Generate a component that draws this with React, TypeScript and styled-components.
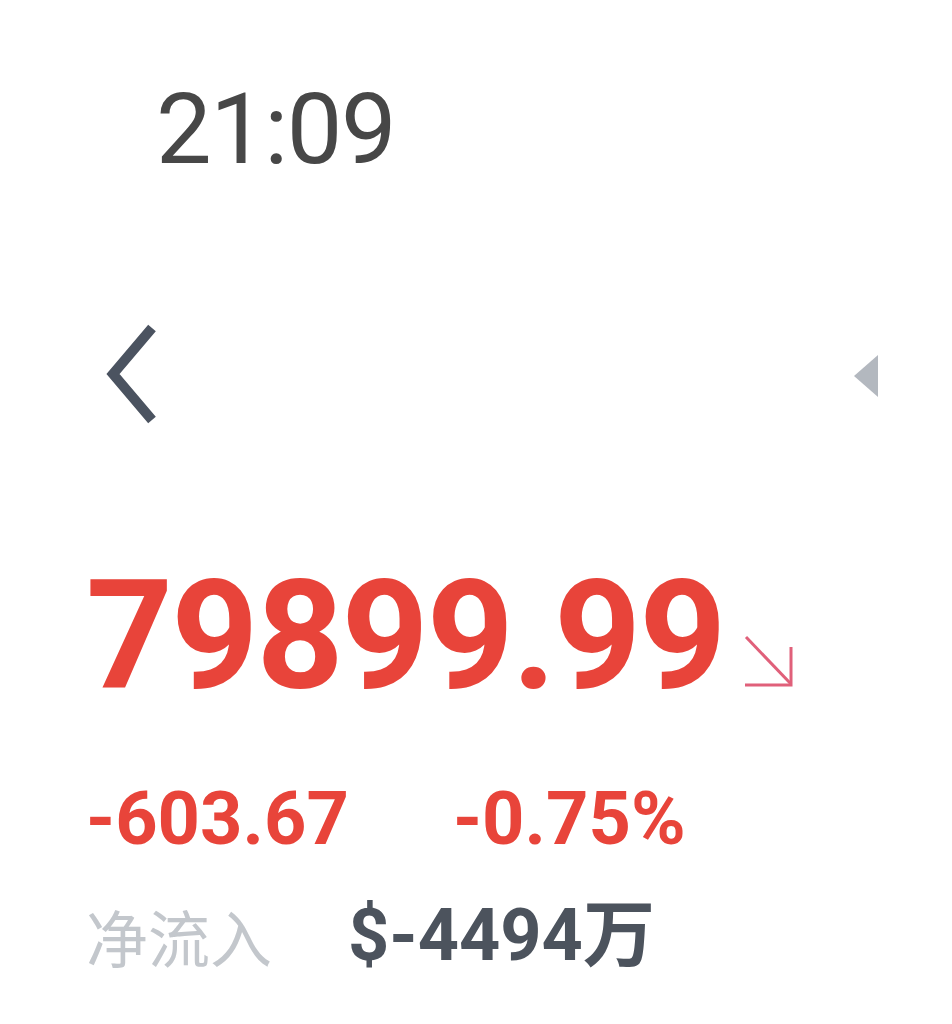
import React from "react";
import styled, { createGlobalStyle } from "styled-components";

const Global = createGlobalStyle`
  html, body { margin: 0; padding: 0; background: #ffffff; }
  body { font-family: Roboto, "Noto Sans CJK SC", sans-serif; }
`;

const Page = styled.div`
  width: 952px;
  height: 1024px;
  background: #fff;
  display: flex;
  flex-direction: column;
  overflow: hidden;
`;

const StatusBar = styled.div`
  height: 200px;
  padding-left: 156px;
  padding-top: 80px;
  box-sizing: border-box;
`;

const Clock = styled.div`
  font-family: Roboto, sans-serif;
  font-size: 99px;
  line-height: 1;
  color: #474747;
  letter-spacing: -1.5px;
`;

const NavBar = styled.div`
  height: 360px;
  display: flex;
  align-items: flex-start;
  justify-content: space-between;
  padding: 124px 72px 0 104px;
  box-sizing: border-box;
`;

const IconButton = styled.button`
  border: 0;
  background: none;
  padding: 0;
  margin: 0;
  display: flex;
  cursor: pointer;
`;

const TriangleBox = styled.div`
  margin-top: 31px;
`;

const Quote = styled.div`
  padding-left: 86px;
  display: flex;
  flex-direction: column;
`;

const PriceRow = styled.div`
  display: flex;
  align-items: flex-end;
`;

const Price = styled.div`
  font-family: Roboto, sans-serif;
  font-weight: 700;
  font-size: 152px;
  line-height: 1;
  color: #e8443a;
  letter-spacing: -2px;
`;

const Arrow = styled.div`
  margin-left: 18px;
  margin-bottom: 24px;
  display: flex;
`;

const ChangeRow = styled.div`
  display: flex;
  margin-top: 70px;
  gap: 104px;
`;

const Change = styled.div`
  font-family: Roboto, sans-serif;
  font-weight: 700;
  font-size: 74px;
  line-height: 1;
  color: #e8443a;
`;

const FlowRow = styled.div`
  display: flex;
  align-items: center;
  margin-top: 44px;
  gap: 76px;
`;

const FlowLabel = styled.div`
  font-family: "Noto Sans CJK SC", sans-serif;
  font-size: 62px;
  line-height: 1;
  color: #c3c7cc;
`;

const FlowValue = styled.div`
  font-family: Roboto, "Noto Sans CJK SC", sans-serif;
  font-weight: 700;
  font-size: 72px;
  line-height: 1;
  color: #4c535d;
`;

export default function App() {
  return (
    <Page>
      <Global />
      <StatusBar>
        <Clock>21:09</Clock>
      </StatusBar>
      <NavBar>
        <IconButton aria-label="back">
          <svg width="56" height="100" viewBox="0 0 56 100">
            <path d="M48 4 L9 50 L48 96" fill="none" stroke="#4b5360" strokeWidth="10" strokeLinecap="butt" strokeLinejoin="miter" />
          </svg>
        </IconButton>
        <TriangleBox>
          <svg width="26" height="42" viewBox="0 0 26 42">
            <path d="M24 0 L24 42 L0 21 Z" fill="#b3b8bf" />
          </svg>
        </TriangleBox>
      </NavBar>
      <Quote>
        <PriceRow>
          <Price>79899.99</Price>
          <Arrow>
            <svg width="52" height="54" viewBox="0 0 52 54">
              <path d="M3 3 L48 50" fill="none" stroke="#e0607a" strokeWidth="3" />
              <path d="M48 13 L48 51 L2 51" fill="none" stroke="#e0607a" strokeWidth="3" />
            </svg>
          </Arrow>
        </PriceRow>
        <ChangeRow>
          <Change>-603.67</Change>
          <Change>-0.75%</Change>
        </ChangeRow>
        <FlowRow>
          <FlowLabel>净流入</FlowLabel>
          <FlowValue>$-4494万</FlowValue>
        </FlowRow>
      </Quote>
    </Page>
  );
}
